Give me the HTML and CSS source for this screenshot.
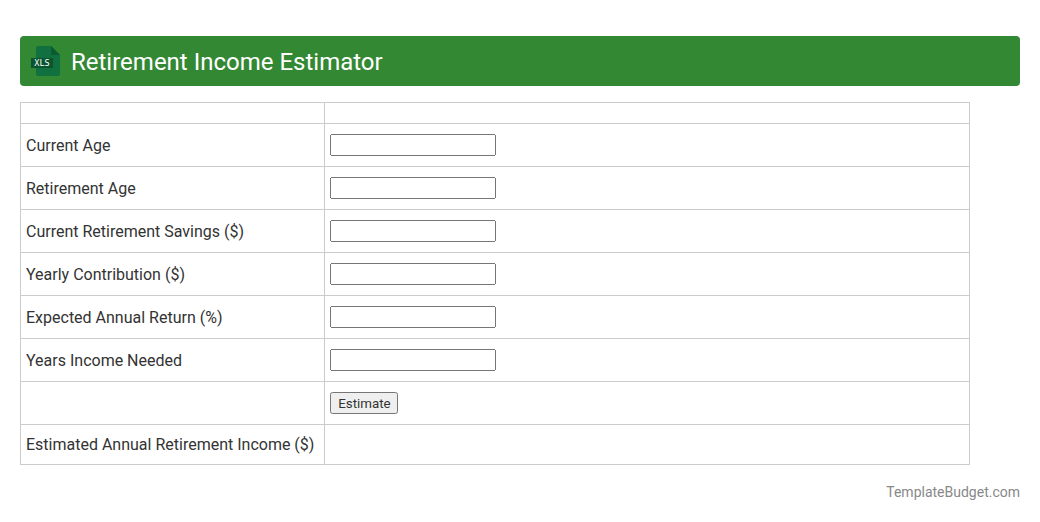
FILE: index.html
```html
<!DOCTYPE html>
<html lang="en">
<head>
  <meta charset="UTF-8" />
  <title>Retirement Income Estimator</title>
  <link rel="stylesheet" href="styles.css">
</head>
<body>

<div class="title-bar">
  <svg class="xls-icon" width="30" height="32" viewBox="0 0 30 32">
    <path d="M6 3a2 2 0 0 1 2-2h13l9 9v19a2 2 0 0 1-2 2H8a2 2 0 0 1-2-2z" fill="#107040"/>
    <path d="M21 1l9 9h-9z" fill="#0b5a32"/>
    <rect x="1" y="13" width="22" height="10" fill="#0a5530"/>
    <text x="12" y="21" class="xls-text">XLS</text>
  </svg>
  <h1>Retirement Income Estimator</h1>
</div>

<table class="calc">
  <tr><td class="label"></td><td></td></tr>
  <tr><td class="label">Current Age</td><td><input type="text" /></td></tr>
  <tr><td class="label">Retirement Age</td><td><input type="text" /></td></tr>
  <tr><td class="label">Current Retirement Savings ($)</td><td><input type="text" /></td></tr>
  <tr><td class="label">Yearly Contribution ($)</td><td><input type="text" /></td></tr>
  <tr><td class="label">Expected Annual Return (%)</td><td><input type="text" /></td></tr>
  <tr><td class="label">Years Income Needed</td><td><input type="text" /></td></tr>
  <tr><td class="label"></td><td><button>Estimate</button></td></tr>
  <tr><td class="label">Estimated Annual Retirement Income ($)</td><td></td></tr>
</table>

<div class="credit">TemplateBudget.com</div>

</body>
</html>
```

FILE: styles.css
```css
body { font-family: Roboto, Arial, sans-serif; font-size: 16px; color: #333; margin: 0; padding: 36px 20px 0; background: white; }

.title-bar { display: flex; align-items: center; height: 50px; background: #338833; border-radius: 4px; padding-left: 10px; margin-bottom: 16px; }
.title-bar h1 { margin: 2px 0 0 11px; font-size: 24px; font-weight: 400; color: white; }
.xls-icon { display: block; }
.xls-text { font-family: "DejaVu Sans Mono", monospace; font-size: 8.5px; fill: white; text-anchor: middle; }

.calc { border-collapse: collapse; width: 950px; }
.calc td { border: 1px solid #ccc; padding: 10px 5px; }
.calc .label { width: 1%; white-space: nowrap; padding-right: 10px; }
.calc input { display: block; width: 166px; height: 22px; box-sizing: border-box; }
.calc button { display: block; font-family: Roboto, Arial, sans-serif; font-size: 13.33px; color: #333; height: 22px; width: 68px; padding: 0; }

.credit { margin-top: 19px; text-align: right; font-size: 14px; color: #888; }
```
